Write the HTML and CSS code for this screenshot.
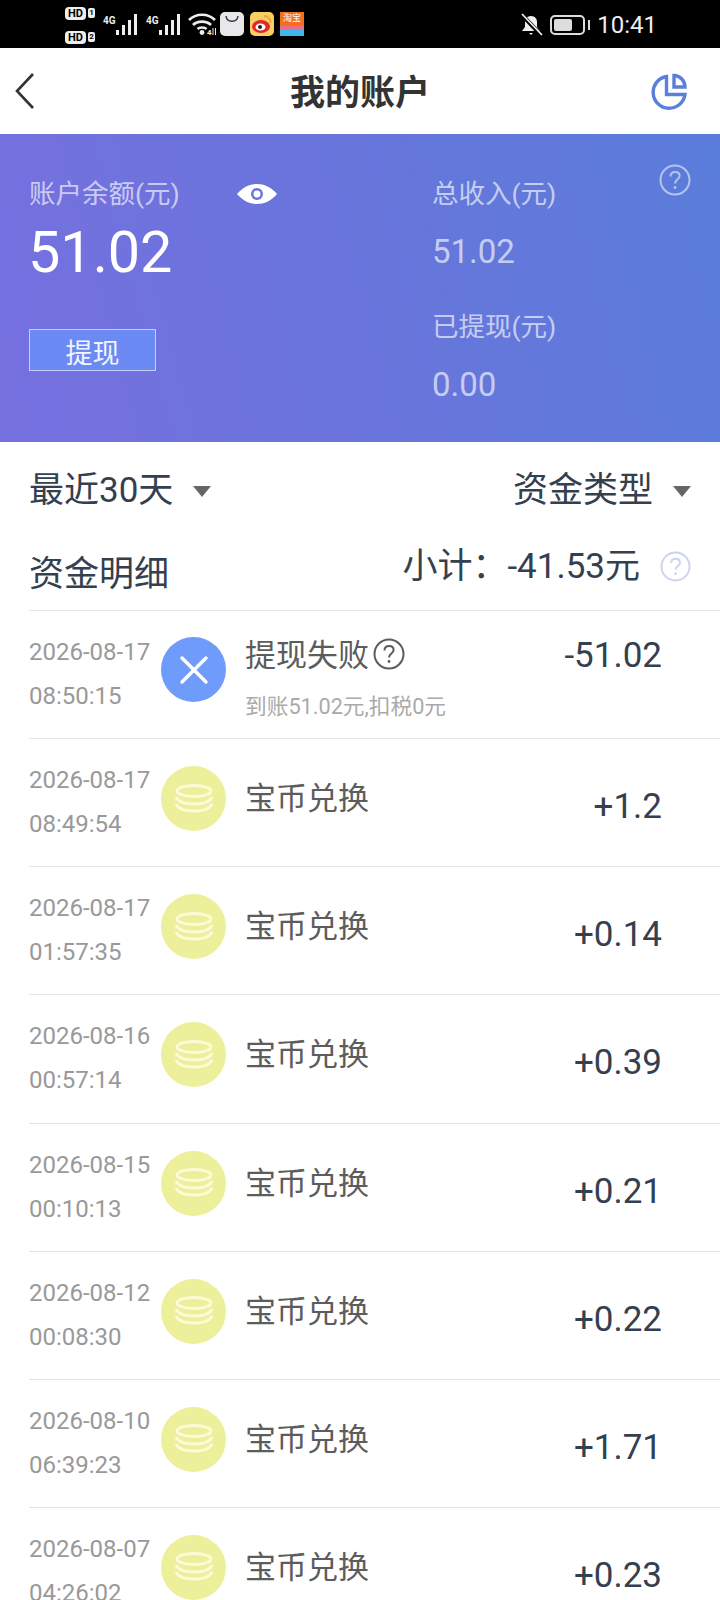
FILE: index.html
```html
<!DOCTYPE html>
<html lang="zh-CN">
<head>
    <meta charset="UTF-8">
    <meta name="viewport" content="width=device-width, initial-scale=1.0">
    <title>我的账户</title>
    <link rel="stylesheet" href="styles.css">
</head>
<body>
    <svg class="defs" width="0" height="0">
        <symbol id="coins" viewBox="0 0 64 64">
            <g fill="none" stroke="#fbfbd8" stroke-width="3">
                <ellipse cx="32" cy="24" rx="17" ry="5.500"/>
                <path d="M14 30c2 5 10 7 18 7s16-2 18-7"/>
                <path d="M14 37c2 5 10 7 18 7s16-2 18-7"/>
            </g>
        </symbol>
        <symbol id="help" viewBox="0 0 32 32">
            <circle cx="16" cy="16" r="14.500" fill="none" stroke="currentColor" stroke-width="2"/>
            <path d="M11.500 12.500c0-2.800 2-4.500 4.600-4.500s4.500 1.600 4.500 4c0 3.400-4.600 3.600-4.600 7.400" fill="none" stroke="currentColor" stroke-width="2"/>
            <circle cx="16" cy="23.500" r="1.400" fill="currentColor"/>
        </symbol>
    </svg>

    <div class="status-bar">
        <div class="status-left">
            <div class="sim-col">
                <div class="sim"><span class="hd">HD</span><span class="sim-no">1</span></div>
                <div class="sim"><span class="hd">HD</span><span class="sim-no">2</span></div>
            </div>
            <div class="signal">
                <span class="net">4G</span>
                <svg width="23" height="21" viewBox="0 0 23 21"><path d="M1 16h3v5H1zM7 11h3v10H7zM13 6h3v15h-3zM19 0h3v21h-3z" fill="#eee"/></svg>
            </div>
            <div class="signal">
                <span class="net">4G</span>
                <svg width="23" height="21" viewBox="0 0 23 21"><path d="M1 16h3v5H1zM7 11h3v10H7zM13 6h3v15h-3zM19 0h3v21h-3z" fill="#eee"/></svg>
            </div>
            <svg class="wifi" width="29" height="22" viewBox="0 0 29 22">
                <g fill="none" stroke="#eee" stroke-width="2.600">
                    <path d="M1 7c7-7 19-7 26 0"/>
                    <path d="M5 12c4.500-4.500 13.500-4.500 18 0"/>
                    <path d="M9.500 16c2-2 7-2 9 0"/>
                </g>
                <circle cx="14" cy="19.500" r="2.400" fill="#eee"/>
                <text x="19" y="21.500" class="wifi-tag">4</text>
                <path d="M25 15v7M27.500 15v7" stroke="#eee" stroke-width="1"/>
            </svg>
            <div class="app-bag">
                <svg width="14" height="8" viewBox="0 0 14 8"><path d="M1 1c1 7 11 7 12 0" fill="none" stroke="#333" stroke-width="1.400"/></svg>
            </div>
            <div class="app-weibo">
                <svg width="24" height="24" viewBox="0 0 24 24">
                    <ellipse cx="11" cy="14.500" rx="9" ry="6.500" fill="#e6262d"/>
                    <ellipse cx="10.500" cy="15" rx="5" ry="3.600" fill="#fff"/>
                    <circle cx="10" cy="15" r="2" fill="#222"/>
                    <path d="M14 4c4 0 7 3 6.500 7" fill="none" stroke="#f2a33a" stroke-width="1.800"/>
                </svg>
            </div>
            <div class="app-promo"><span class="promo-top">淘宝</span><span class="promo-band"></span></div>
        </div>
        <div class="status-right">
            <svg class="bell" width="24" height="24" viewBox="0 0 24 24">
                <path d="M12 3c-4 0-6 3-6 6v5l-3 4h18l-3-4V9c0-3-2-6-6-6z" fill="#eee"/>
                <path d="M10 20h4l-2 2z" fill="#eee"/>
                <path d="M3 2l19 20" stroke="#000" stroke-width="4"/>
                <path d="M3 1l20 21" stroke="#eee" stroke-width="1.800"/>
            </svg>
            <div class="battery"><span class="battery-fill"></span></div>
            <span class="battery-cap"></span>
            <span class="clock">10:41</span>
        </div>
    </div>

    <header class="top-nav">
        <svg class="back" width="24" height="38" viewBox="0 0 24 38"><path d="M20 2L4 19l16 17" fill="none" stroke="#333" stroke-width="2.600"/></svg>
        <h1>我的账户</h1>
        <svg class="chart" width="38" height="38" viewBox="0 0 38 38">
            <g fill="none" stroke="#5b80dc" stroke-width="3.400">
                <path d="M16.500 4.500A16 16 0 1 0 35 22.500H16.500z"/>
                <path d="M24 3.500A11.500 11.500 0 0 1 35 15H24z"/>
            </g>
        </svg>
    </header>

    <section class="hero">
        <div class="hero-left">
            <div class="balance-head">
                <span class="hero-label">账户余额(元)</span>
                <svg class="eye" width="40" height="20" viewBox="0 0 40 20">
                    <path d="M0 10C6 3 13 0 20 0s14 3 20 10c-6 7-13 10-20 10S6 17 0 10z" fill="#fff"/>
                    <circle cx="20" cy="10" r="6" fill="#6a73dc"/>
                    <circle cx="20" cy="10" r="3.500" fill="#fff"/>
                </svg>
            </div>
            <div class="balance">51.02</div>
            <button class="withdraw">提现</button>
        </div>
        <div class="hero-right">
            <span class="hero-label">总收入(元)</span>
            <div class="hero-num">51.02</div>
            <span class="hero-label second">已提现(元)</span>
            <div class="hero-num">0.00</div>
        </div>
        <svg class="hero-help"><use href="#help"/></svg>
    </section>

    <div class="filters">
        <div class="filter">最近30天<span class="caret"></span></div>
        <div class="filter">资金类型<span class="caret"></span></div>
    </div>

    <div class="summary">
        <h2>资金明细</h2>
        <div class="subtotal">
            <span>小计：-41.53元</span>
            <svg class="subtotal-help"><use href="#help"/></svg>
        </div>
    </div>

    <div class="records" id="records">
        <div class="record failed">
            <div class="when"><div>2026-08-17</div><div>08:50:15</div></div>
            <div class="badge fail">
                <svg width="32" height="32" viewBox="0 0 32 32"><path d="M4 4l24 24M28 4L4 28" stroke="#fff" stroke-width="3.400" stroke-linecap="round"/></svg>
            </div>
            <div class="what">
                <div class="what-title">提现失败<svg class="what-help"><use href="#help"/></svg></div>
                <div class="what-note">到账51.02元,扣税0元</div>
            </div>
            <div class="amount">-51.02</div>
        </div>
        <div class="record">
            <div class="when"><div>2026-08-17</div><div>08:49:54</div></div>
            <div class="badge coin"><svg width="64" height="64"><use href="#coins"/></svg></div>
            <div class="what"><div class="what-title">宝币兑换</div></div>
            <div class="amount">+1.2</div>
        </div>
        <div class="record">
            <div class="when"><div>2026-08-17</div><div>01:57:35</div></div>
            <div class="badge coin"><svg width="64" height="64"><use href="#coins"/></svg></div>
            <div class="what"><div class="what-title">宝币兑换</div></div>
            <div class="amount">+0.14</div>
        </div>
        <div class="record">
            <div class="when"><div>2026-08-16</div><div>00:57:14</div></div>
            <div class="badge coin"><svg width="64" height="64"><use href="#coins"/></svg></div>
            <div class="what"><div class="what-title">宝币兑换</div></div>
            <div class="amount">+0.39</div>
        </div>
        <div class="record">
            <div class="when"><div>2026-08-15</div><div>00:10:13</div></div>
            <div class="badge coin"><svg width="64" height="64"><use href="#coins"/></svg></div>
            <div class="what"><div class="what-title">宝币兑换</div></div>
            <div class="amount">+0.21</div>
        </div>
        <div class="record">
            <div class="when"><div>2026-08-12</div><div>00:08:30</div></div>
            <div class="badge coin"><svg width="64" height="64"><use href="#coins"/></svg></div>
            <div class="what"><div class="what-title">宝币兑换</div></div>
            <div class="amount">+0.22</div>
        </div>
        <div class="record">
            <div class="when"><div>2026-08-10</div><div>06:39:23</div></div>
            <div class="badge coin"><svg width="64" height="64"><use href="#coins"/></svg></div>
            <div class="what"><div class="what-title">宝币兑换</div></div>
            <div class="amount">+1.71</div>
        </div>
        <div class="record">
            <div class="when"><div>2026-08-07</div><div>04:26:02</div></div>
            <div class="badge coin"><svg width="64" height="64"><use href="#coins"/></svg></div>
            <div class="what"><div class="what-title">宝币兑换</div></div>
            <div class="amount">+0.23</div>
        </div>
    </div>
</body>
</html>
```

FILE: styles.css
```css
* {
    box-sizing: border-box;
}

html, body {
    margin: 0;
    padding: 0;
    height: 1600px;
    overflow: hidden;
}

body {
    font-family: Roboto, "Noto Sans CJK SC", sans-serif;
    background-color: #fff;
    color: #333;
}

.defs {
    display: block;
    height: 0;
}

/* status bar */
.status-bar {
    height: 48px;
    background-color: #000;
    display: flex;
    justify-content: space-between;
    align-items: center;
    padding: 0 65px;
    color: #eee;
}

.status-left {
    display: flex;
    align-items: center;
}

.status-right {
    display: flex;
    align-items: center;
    margin-right: -2px;
    padding-top: 1px;
}

.sim-col {
    display: flex;
    flex-direction: column;
    gap: 11px;
    margin: 2px 8px 0 0;
}

.sim {
    display: flex;
    align-items: center;
    gap: 2px;
}

.hd {
    font-size: 11px;
    line-height: 13px;
    font-weight: 700;
    width: 21px;
    text-align: center;
    background-color: #eee;
    color: #000;
    border-radius: 4px;
}

.sim-no {
    font-size: 8px;
    font-weight: 700;
    line-height: 10px;
    width: 7px;
    background-color: #eee;
    color: #000;
    border-radius: 2px;
    text-align: center;
}

.signal {
    display: flex;
    width: 35px;
    height: 21px;
    margin-right: 8px;
}

.signal + .signal {
    margin-right: 7px;
}

.net {
    width: 12px;
    font-size: 10px;
    line-height: 10px;
    font-weight: 700;
    margin-top: 2px;
    white-space: nowrap;
}

.wifi {
    margin-right: 3px;
}

.wifi-tag {
    font: 700 8px Roboto, sans-serif;
    fill: #eee;
}

.app-bag, .app-weibo, .app-promo {
    width: 24px;
    height: 24px;
    border-radius: 5px;
    margin-right: 6px;
}

.app-bag {
    background-color: #e8e8ea;
    text-align: center;
    line-height: 12px;
}

.app-weibo {
    background-color: #f7cf62;
}

.app-promo {
    margin-right: 0;
    border-radius: 0;
    background: linear-gradient(#f2701b 0 60%, #ee6c8c 60% 100%);
    display: flex;
    flex-direction: column;
    justify-content: space-between;
    overflow: hidden;
}

.promo-top {
    font-size: 9px;
    line-height: 12px;
    color: #fff;
    text-align: center;
}

.promo-band {
    height: 6px;
    background-color: #3fb7e8;
}

.bell {
    margin-right: 7px;
}

.battery {
    width: 35px;
    height: 20px;
    border: 2px solid #ddd;
    border-radius: 5px;
    padding: 2px;
}

.battery-fill {
    display: block;
    width: 18px;
    height: 12px;
    background-color: #ddd;
    border-radius: 2px;
}

.battery-cap {
    width: 2px;
    height: 10px;
    margin-left: 3px;
    background-color: #ddd;
}

.clock {
    font-size: 24px;
    margin-left: 7px;
    color: #eee;
}

/* title bar */
.top-nav {
    height: 86px;
    position: relative;
    display: flex;
    align-items: center;
    justify-content: space-between;
    padding: 0 32px 0 13px;
}

.top-nav h1 {
    position: absolute;
    left: 0;
    right: 0;
    margin: -3px 0 0;
    text-align: center;
    font-size: 35px;
    font-weight: 700;
    color: #333;
}

/* balance block */
.hero {
    height: 308px;
    position: relative;
    display: flex;
    padding: 40px 0 0 29px;
    background: linear-gradient(75deg, #7770e0 0%, #6a74dc 45%, #5a7dda 100%);
}

.hero-left {
    width: 403px;
}

.balance-head {
    display: flex;
    align-items: center;
    justify-content: space-between;
    width: 248px;
}

.hero-label {
    font-size: 26.500px;
    line-height: 40px;
    color: rgba(255, 255, 255, 0.65);
}

.balance {
    font-size: 57.500px;
    line-height: 70px;
    color: #fff;
    margin: 4px 0 0 -1px;
}

.withdraw {
    display: block;
    width: 127px;
    height: 42px;
    margin-top: 41px;
    padding: 8px 0 0;
    border: 1px solid rgba(255, 255, 255, 0.6);
    background-color: #6b8af4;
    color: #f2f4ff;
    font: 27px/32px Roboto, "Noto Sans CJK SC", sans-serif;
}

.hero-right {
    display: flex;
    flex-direction: column;
}

.hero-num {
    font-size: 33px;
    line-height: 40px;
    margin-top: 18px;
    color: rgba(255, 255, 255, 0.65);
}

.second {
    margin-top: 35px;
}

.hero-help {
    position: absolute;
    top: 30px;
    right: 29px;
    width: 32px;
    height: 32px;
    color: rgba(255, 255, 255, 0.55);
}

/* filter row */
.filters {
    display: flex;
    justify-content: space-between;
    padding: 24px 29px 0;
    height: 86px;
}

.filter {
    font-size: 35px;
    line-height: 50px;
    height: 50px;
    color: #34404f;
    display: flex;
    align-items: center;
}

.caret {
    width: 0;
    height: 0;
    margin-left: 20px;
    border-left: 9px solid transparent;
    border-right: 9px solid transparent;
    border-top: 11px solid #666;
}

.summary {
    height: 82px;
    display: flex;
    justify-content: space-between;
    padding: 0 29px;
}

.summary h2 {
    margin: 22px 0 0;
    font-size: 35px;
    line-height: 50px;
    font-weight: 400;
    color: #34404f;
}

.subtotal {
    display: flex;
    align-items: flex-start;
    font-size: 35px;
    line-height: 50px;
    color: #34404f;
    padding-top: 14px;
}

.subtotal-help {
    width: 31px;
    height: 31px;
    margin: 9px 0 0 20px;
    color: #cdd3ef;
}

/* money records */
.records {
    margin-left: 29px;
}

.record {
    height: 128.150px;
    display: flex;
    border-top: 1px solid #e4e4e4;
}

.when {
    width: 132px;
    flex-shrink: 0;
    font-size: 24px;
    line-height: 44px;
    color: #999;
    padding-top: 19px;
    white-space: nowrap;
}

.badge {
    width: 65px;
    height: 65px;
    border-radius: 50%;
    margin-top: 26px;
    display: flex;
    align-items: center;
    justify-content: center;
}

.fail {
    background-color: #6f9bfb;
}

.coin {
    margin-top: 27px;
    background-color: #ecf09b;
}

.what {
    margin-left: 19px;
    padding-top: 38px;
}

.failed .what {
    padding-top: 23px;
}

.what-title {
    font-size: 31px;
    line-height: 44px;
    color: #5c5c5c;
    display: flex;
    align-items: center;
}

.what-help {
    width: 32px;
    height: 32px;
    margin-left: 4px;
    margin-bottom: 4px;
    color: #5c5c5c;
}

.what-note {
    font-size: 21.700px;
    line-height: 30px;
    margin-top: 14px;
    color: #aaa;
}

.amount {
    margin: 46px 58px 0 auto;
    font-size: 35px;
    line-height: 44px;
    color: #34404f;
}

.failed .amount {
    margin-top: 23px;
}
```
